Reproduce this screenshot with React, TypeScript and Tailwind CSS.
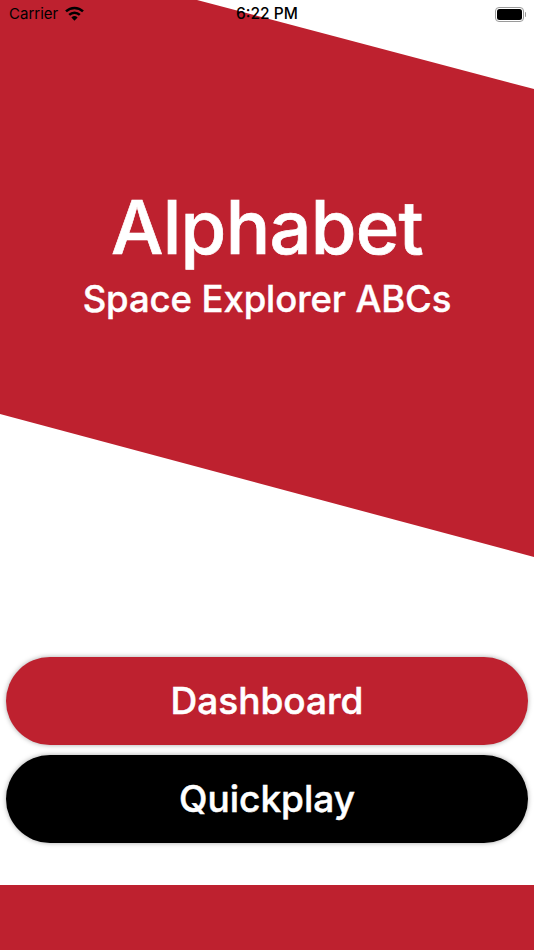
export default function App() {
  return (
    <div className="relative flex h-[950px] w-[534px] flex-col overflow-hidden bg-white font-['Inter',sans-serif]">
      {/* Status bar */}
      <div className="absolute inset-x-0 top-0 z-10 flex h-[28px] items-center justify-between pl-[9px] pr-[8px] text-[15.500px] text-black">
        <div className="flex items-center gap-[7px]">
          <span className="text-[15px]">Carrier</span>
          <svg width="19" height="15" viewBox="0 0 19 15" fill="none" className="mb-[2px]">
            <path d="M1 5.400A12.200 12.200 0 0 1 18 5.400" stroke="black" strokeWidth="2.500" />
            <path d="M4.200 8.900A7.600 7.600 0 0 1 14.800 8.900" stroke="black" strokeWidth="2.500" />
            <path d="M9.500 14.800L6.400 11.400A4.600 4.600 0 0 1 12.600 11.400Z" fill="black" />
          </svg>
        </div>
        <span className="absolute left-[236px] top-[4px] font-medium leading-[20px]">6:22 PM</span>
        <div className="flex items-center">
          <div className="flex h-[15px] w-[29px] items-center rounded-[4px] border border-[#9a9a9a] p-[1px]">
            <div className="h-full w-full rounded-[2.5px] bg-black" />
          </div>
          <div className="ml-[1px] h-[5px] w-[1px] rounded-r-full bg-[#9a9a9a]" />
        </div>
      </div>

      {/* Banner */}
      <div className="flex h-[557px] shrink-0 flex-col items-center bg-[#be212f] pt-[183px] text-white [clip-path:polygon(0_0,197px_0,100%_89px,100%_100%,0_414px)]">
        <h1 className="text-[74px] font-medium leading-[88px] tracking-[-0.7px] [-webkit-text-stroke:0.7px_white]">Alphabet</h1>
        <p className="mt-[6px] text-[36.500px] font-medium leading-[44px] tracking-[-0.1px] [-webkit-text-stroke:0.4px_white]">Space Explorer ABCs</p>
      </div>

      {/* Actions */}
      <div className="mt-[100px] flex flex-col gap-[10.500px] px-[6px]">
        <button className="flex h-[87.500px] items-center justify-center rounded-full bg-[#be212f] text-[37px] font-medium text-white shadow-[0_0_5px_rgba(0,0,0,0.35)] [-webkit-text-stroke:0.5px_white]">
          Dashboard
        </button>
        <button className="flex h-[87.500px] items-center justify-center rounded-full bg-black text-[37px] font-medium text-white shadow-[0_0_5px_rgba(0,0,0,0.35)] [-webkit-text-stroke:0.5px_white]">
          Quickplay
        </button>
      </div>

      {/* Footer band */}
      <div className="mt-auto h-[65px] bg-[#be212f]" />
    </div>
  )
}
